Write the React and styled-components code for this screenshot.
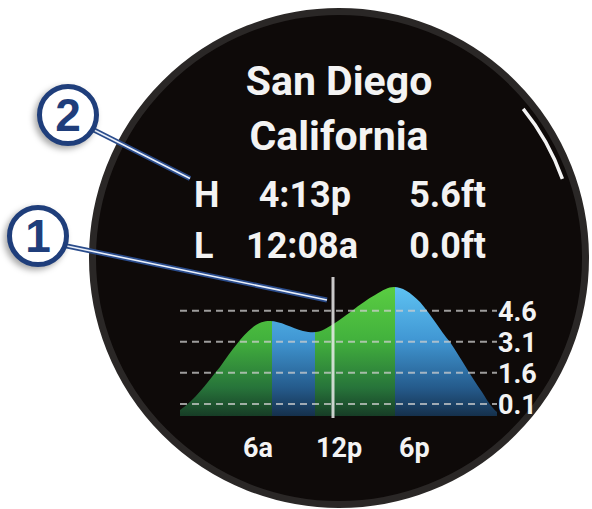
import React from 'react';
import styled, { createGlobalStyle } from 'styled-components';

const Global = createGlobalStyle`
  html, body { margin: 0; padding: 0; background: #ffffff; }
  body { font-family: Roboto, "Noto Sans", sans-serif; }
`;

const Page = styled.div`
  position: relative;
  width: 592px;
  height: 509px;
  overflow: hidden;
  box-sizing: border-box;
  padding: 8px 0 0 89px;
  background: #ffffff;
`;

const Watch = styled.div`
  position: relative;
  width: 500px;
  height: 500px;
  box-sizing: border-box;
  border-radius: 50%;
  border: 7px solid #2a2726;
  background: #0e0a09;
  display: flex;
  flex-direction: column;
  padding-top: 38.5px;
  color: #f3f3f3;
  font-family: Roboto, "Noto Sans", sans-serif;
  font-weight: 700;
`;

const ScrollArc = styled.svg`
  position: absolute;
  top: -7px;
  left: -7px;
  width: 500px;
  height: 500px;
  pointer-events: none;
`;

const Title = styled.div`
  text-align: center;
  font-size: 41px;
  line-height: 55px;
`;

const TideTable = styled.div`
  display: grid;
  grid-template-columns: 52px 105px 135px;
  margin: 6.7px 0 0 98px;
  font-size: 36px;
  line-height: 51px;
`;

const Cell = styled.div`
  text-align: ${(p) => (p.$right ? 'right' : 'left')};
  white-space: nowrap;
`;

const ChartRow = styled.div`
  display: flex;
  margin: 2px 0 0 82px;
`;

const YAxis = styled.div`
  display: flex;
  flex-direction: column;
  margin-top: 23px;
  font-size: 27px;
  line-height: 31px;
`;

const XAxis = styled.div`
  display: grid;
  grid-template-columns: 73px 83px auto;
  margin: 10.8px 0 0 147px;
  font-size: 27px;
  line-height: 32px;
`;

const Overlay = styled.svg`
  position: absolute;
  inset: 0;
  width: 592px;
  height: 509px;
  pointer-events: none;
`;

const Badge = styled.div`
  position: absolute;
  left: ${(p) => p.$cx - 31}px;
  top: ${(p) => p.$cy - 31}px;
  width: 62px;
  height: 62px;
  box-sizing: border-box;
  border-radius: 50%;
  border: 5px solid #1f3e7b;
  background: #ffffff;
  box-shadow: -3px 3px 6px rgba(0, 0, 0, 0.35);
  display: flex;
  align-items: center;
  justify-content: center;
  font-family: "Liberation Sans", Arial, sans-serif;
  font-weight: 700;
  font-size: 46px;
  line-height: 1;
  color: #1f3e7b;
`;

const areaPath =
  'M180,416 L180,410 C195,400 205,385 220,367 C232,350 242,336 252,328 C258,323 263,321 270,321 ' +
  'C280,321 292,328 303,331 C312,333 318,333 325,329 C345,318 360,303 375,295 C383,290 388,287 394,287 ' +
  'C402,287 410,292 420,302 C432,316 440,330 450,342 C462,360 472,378 482,392 C488,402 493,409 497,412 L497,416 Z';

const segments = [
  { x0: 180, x1: 272, c: 'g' },
  { x0: 272, x1: 315, c: 'b' },
  { x0: 315, x1: 395, c: 'g' },
  { x0: 395, x1: 498, c: 'b' },
];

const gridLines = [310.7, 341.7, 372.7, 404];
const yLabels = ['4.6', '3.1', '1.6', '0.1'];

function TideChart() {
  return (
    <svg width="320" height="146" viewBox="178 274 320 146">
      <defs>
        <linearGradient id="gGreen" gradientUnits="userSpaceOnUse" x1="0" y1="287" x2="0" y2="416">
          <stop offset="0" stopColor="#5acd42" />
          <stop offset="0.4" stopColor="#43b23d" />
          <stop offset="0.78" stopColor="#27743a" />
          <stop offset="1" stopColor="#173d26" />
        </linearGradient>
        <linearGradient id="gBlue" gradientUnits="userSpaceOnUse" x1="0" y1="287" x2="0" y2="416">
          <stop offset="0" stopColor="#5ec2f2" />
          <stop offset="0.4" stopColor="#4198d4" />
          <stop offset="0.78" stopColor="#255b8c" />
          <stop offset="1" stopColor="#15304c" />
        </linearGradient>
        <clipPath id="areaClip">
          <path d={areaPath} />
        </clipPath>
      </defs>
      <g clipPath="url(#areaClip)">
        {segments.map((s) => (
          <rect
            key={s.x0}
            x={s.x0}
            y="280"
            width={s.x1 - s.x0}
            height="140"
            fill={s.c === 'g' ? 'url(#gGreen)' : 'url(#gBlue)'}
          />
        ))}
      </g>
      {gridLines.map((y) => (
        <line
          key={y}
          x1="180"
          x2="497"
          y1={y}
          y2={y}
          stroke="rgba(205,205,205,0.75)"
          strokeWidth="2"
          strokeDasharray="7 5"
        />
      ))}
      <line x1="333" x2="333" y1="277" y2="418" stroke="rgba(235,235,235,0.85)" strokeWidth="3" />
    </svg>
  );
}

export default function App() {
  return (
    <>
      <Global />
      <Page>
        <Watch>
          <ScrollArc viewBox="0 0 500 500">
            <path
              d="M434.2,100.9 A237,237 0 0 1 473.4,170.9"
              fill="none"
              stroke="#f4f4f4"
              strokeWidth="3.5"
            />
          </ScrollArc>
          <Title>
            <div>San Diego</div>
            <div>California</div>
          </Title>
          <TideTable>
            <Cell>H</Cell>
            <Cell $right>4:13p</Cell>
            <Cell $right>5.6ft</Cell>
            <Cell>L</Cell>
            <Cell $right>12:08a</Cell>
            <Cell $right>0.0ft</Cell>
          </TideTable>
          <ChartRow>
            <TideChart />
            <YAxis>
              {yLabels.map((l) => (
                <div key={l}>{l}</div>
              ))}
            </YAxis>
          </ChartRow>
          <XAxis>
            <div>6a</div>
            <div>12p</div>
            <div>6p</div>
          </XAxis>
        </Watch>
        <Overlay viewBox="0 0 592 509">
          <g strokeLinecap="butt">
            <line x1="92" x2="190" y1="129" y2="178.5" stroke="#2a4c8c" strokeWidth="5" />
            <line x1="92" x2="190" y1="129" y2="178.5" stroke="#eaf0fa" strokeWidth="1.6" />
            <line x1="62" x2="327" y1="245" y2="300" stroke="#2a4c8c" strokeWidth="5" />
            <line x1="62" x2="327" y1="245" y2="300" stroke="#eaf0fa" strokeWidth="1.6" />
          </g>
        </Overlay>
        <Badge $cx={68} $cy={115}>2</Badge>
        <Badge $cx={38} $cy={236}>1</Badge>
      </Page>
    </>
  );
}
